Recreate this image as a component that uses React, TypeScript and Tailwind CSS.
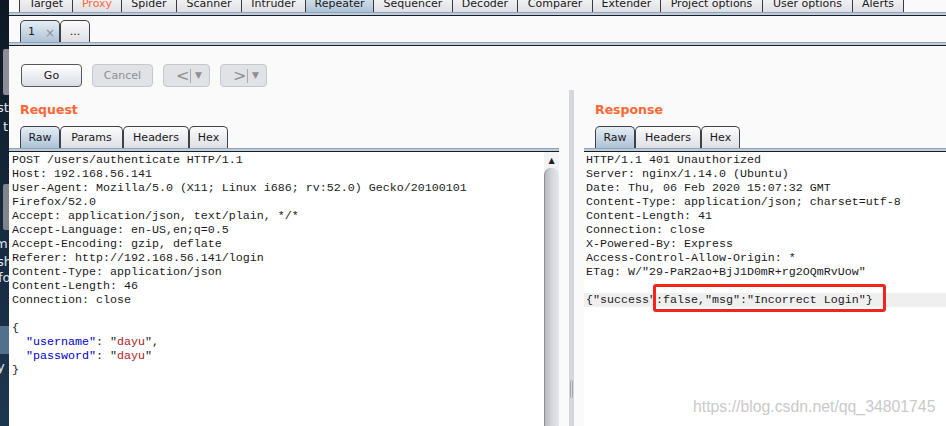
const topTabs = [
  { label: "Target", w: "w-[54px]" },
  { label: "Proxy", w: "w-[49px]", hot: true },
  { label: "Spider", w: "w-[55px]" },
  { label: "Scanner", w: "w-[65px]" },
  { label: "Intruder", w: "w-[64px]" },
  { label: "Repeater", w: "w-[68px]", active: true },
  { label: "Sequencer", w: "w-[79px]" },
  { label: "Decoder", w: "w-[65px]" },
  { label: "Comparer", w: "w-[75px]" },
  { label: "Extender", w: "w-[68px]" },
  { label: "Project options", w: "w-[102px]" },
  { label: "User options", w: "w-[90px]" },
  { label: "Alerts", w: "w-[51px]" },
];

const requestLines = [
  "POST /users/authenticate HTTP/1.1",
  "Host: 192.168.56.141",
  "User-Agent: Mozilla/5.0 (X11; Linux i686; rv:52.0) Gecko/20100101",
  "Firefox/52.0",
  "Accept: application/json, text/plain, */*",
  "Accept-Language: en-US,en;q=0.5",
  "Accept-Encoding: gzip, deflate",
  "Referer: http://192.168.56.141/login",
  "Content-Type: application/json",
  "Content-Length: 46",
  "Connection: close",
  "",
  "{",
];

const responseLines = [
  "HTTP/1.1 401 Unauthorized",
  "Server: nginx/1.14.0 (Ubuntu)",
  "Date: Thu, 06 Feb 2020 15:07:32 GMT",
  "Content-Type: application/json; charset=utf-8",
  "Content-Length: 41",
  "Connection: close",
  "X-Powered-By: Express",
  "Access-Control-Allow-Origin: *",
  'ETag: W/"29-PaR2ao+BjJ1D0mR+rg2OQmRvUow"',
  "",
];

const tabBase =
  "flex h-[22px] items-center justify-center rounded-t-[5px] border border-b-0 border-[#3d4247] pt-[2px]";
const tabOff = "bg-linear-to-b from-[#fbfbfc] to-[#dfe0e4]";
const tabOn = "bg-linear-to-b from-[#e6edf4] to-[#adc2d7]";

function Desktop() {
  return (
    <div className="relative w-[9px] shrink-0 overflow-hidden bg-linear-to-b from-[#0d1824] via-[#16293d] to-[#1d3650] text-[13px] leading-[15px] text-[#dfe6ee]">
      <div className="absolute top-[49px] left-[3px] h-[46px] w-[8px] rounded-[2px] bg-[#8c9096]" />
      <span className="absolute top-[100px] left-[-3px]">st</span>
      <span className="absolute top-[119px] left-[3px]">t</span>
      <div className="absolute top-[184px] left-[3px] h-[46px] w-[8px] rounded-[2px] bg-[#80858c]" />
      <span className="absolute top-[236px] left-[-5px]">m</span>
      <span className="absolute top-[254px] left-[-3px]">sh</span>
      <span className="absolute top-[270px] left-[-2px]">fo</span>
      <div className="absolute top-[326px] left-0 h-[28px] w-[9px] bg-[#52708e]" />
      <span className="absolute top-[359px] left-[-3px]">y</span>
    </div>
  );
}

function Strip() {
  return (
    <>
      <div className="h-[3px] border-t border-[#8ea1b5] bg-[#bccde0]" />
      <div className="h-px bg-[#1c1c1c]" />
    </>
  );
}

function TopTabs() {
  return (
    <>
      <div className="flex h-[12px] items-end overflow-hidden pl-[10px]">
        {topTabs.map((t, i) => (
          <div
            key={t.label}
            className={`flex h-[20px] shrink-0 items-center justify-center border-r border-[#3a3a3a] pt-[5px] ${t.w} ${
              i === 0 ? "border-l" : ""
            } ${t.active ? tabOn : tabOff} ${t.hot ? "text-[#ff6633]" : ""}`}
          >
            {t.label}
          </div>
        ))}
      </div>
      <Strip />
    </>
  );
}

function SubTabs() {
  return (
    <>
      <div className="flex h-[26px] items-end pl-[11px]">
        <div className={`${tabBase} ${tabOn} w-[40px] justify-start pl-[7px]`}>
          <span>1</span>
          <span className="ml-[10px] text-[12px] text-[#8b8f95]">×</span>
        </div>
        <div className={`${tabBase} ${tabOff} w-[30px]`}>...</div>
      </div>
      <Strip />
    </>
  );
}

function ArrowButton({ dir }: { dir: string }) {
  return (
    <div className="flex h-[23px] w-[47px] items-center rounded-[4px] border border-[#c6c7cc] bg-[#e1e2e6] pl-[12px] text-[#8e8f94]">
      <span className="w-[10px] text-[16px] leading-none">{dir}</span>
      <span className="ml-[4px] h-[14px] w-px bg-[#a9aaae]" />
      <span className="ml-[4px] text-[9px]">▼</span>
    </div>
  );
}

function Toolbar() {
  return (
    <div className="mt-[18px] flex gap-[10px] pl-[12px]">
      <div className="flex h-[23px] w-[61px] items-center justify-center rounded-[4px] border border-[#55575c] bg-linear-to-b from-[#ffffff] to-[#dcdde3] pt-px">
        Go
      </div>
      <div className="flex h-[23px] w-[61px] items-center justify-center rounded-[4px] border border-[#c6c7cc] bg-[#e1e2e6] pt-px text-[#8e8f94]">
        Cancel
      </div>
      <ArrowButton dir="<" />
      <ArrowButton dir=">" />
    </div>
  );
}

function SubTabRow({ tabs }: { tabs: { label: string; w: string }[] }) {
  return (
    <div className="mt-[8px] flex pl-[11px]">
      {tabs.map((t, i) => (
        <div key={t.label} className={`${tabBase} ${t.w} ${i === 0 ? tabOn : tabOff}`}>
          {t.label}
        </div>
      ))}
    </div>
  );
}

function Heading({ children }: { children: string }) {
  return (
    <div className="mt-[12px] h-[16px] pl-[11px] text-[12.5px] leading-[16px] font-bold text-[#ff6633]">
      {children}
    </div>
  );
}

function RequestPanel() {
  return (
    <div className="flex w-[550px] shrink-0 flex-col">
      <Heading>Request</Heading>
      <SubTabRow
        tabs={[
          { label: "Raw", w: "w-[40px]" },
          { label: "Params", w: "w-[63px]" },
          { label: "Headers", w: "w-[66px]" },
          { label: "Hex", w: "w-[39px]" },
        ]}
      />
      <Strip />
      <div className="flex flex-1">
        <div className="flex-1 bg-white pt-px pl-[3px] font-['Liberation_Mono',monospace] text-[11.66px] leading-[14px] whitespace-pre text-[#1c1c1c]">
          {requestLines.map((l, i) => (
            <div key={i} className="h-[14px]">
              {l}
            </div>
          ))}
          <div className="h-[14px]">
            {"  "}
            <span className="text-[#0000c8]">"username"</span>: "<span className="text-[#b01c1c]">dayu</span>",
          </div>
          <div className="h-[14px]">
            {"  "}
            <span className="text-[#0000c8]">"password"</span>: "<span className="text-[#b01c1c]">dayu</span>"
          </div>
          <div className="h-[14px]">{"}"}</div>
        </div>
        <div className="flex w-[15px] flex-col bg-[#f3f3f5]">
          <div className="flex h-[16px] items-center justify-center pt-[2px] text-[8px] text-[#222]">▲</div>
          <div className="flex-1 rounded-t-[7px] border-l border-[#8f9196] bg-linear-to-r from-[#b9babf] via-[#d6d7db] to-[#e6e7ea]" />
        </div>
      </div>
    </div>
  );
}

function Divider() {
  return (
    <div className="mx-[10px] flex w-[5px] shrink-0 flex-col bg-[#d4d7dc]">
      <div className="mx-auto mt-[290px] h-[18px] w-[3px] rounded-[2px] border border-[#a3a7ad]" />
    </div>
  );
}

function ResponsePanel() {
  return (
    <div className="flex min-w-0 flex-1 flex-col">
      <Heading>Response</Heading>
      <SubTabRow
        tabs={[
          { label: "Raw", w: "w-[40px]" },
          { label: "Headers", w: "w-[66px]" },
          { label: "Hex", w: "w-[39px]" },
        ]}
      />
      <Strip />
      <div className="relative flex-1 bg-white pt-px font-['Liberation_Mono',monospace] text-[11.66px] leading-[14px] whitespace-pre text-[#1c1c1c]">
        {responseLines.map((l, i) => (
          <div key={i} className="h-[14px] pl-[2px]">
            {l}
          </div>
        ))}
        <div className="h-[14px] bg-[#efefef] pl-[2px]">{'{"success":false,"msg":"Incorrect Login"}'}</div>
        <div className="absolute top-[132px] left-[69px] h-[28px] w-[233px] rounded-[3px] border-[3px] border-[#f4231b]" />
        <div className="absolute top-[246px] left-[109px] font-['Liberation_Sans',sans-serif] text-[15.8px] leading-[18px] text-[#cacaca]">
          https://blog.csdn.net/qq_34801745
        </div>
      </div>
    </div>
  );
}

export default function App() {
  return (
    <div className="flex h-[426px] w-[946px] overflow-hidden font-['DejaVu_Sans',sans-serif] text-[11px] text-[#1a1a1a]">
      <Desktop />
      <div className="flex min-w-0 flex-1 flex-col bg-[#fafafa]">
        <TopTabs />
        <SubTabs />
        <Toolbar />
        <div className="mt-[3px] flex min-h-0 flex-1">
          <RequestPanel />
          <Divider />
          <ResponsePanel />
        </div>
      </div>
    </div>
  );
}
